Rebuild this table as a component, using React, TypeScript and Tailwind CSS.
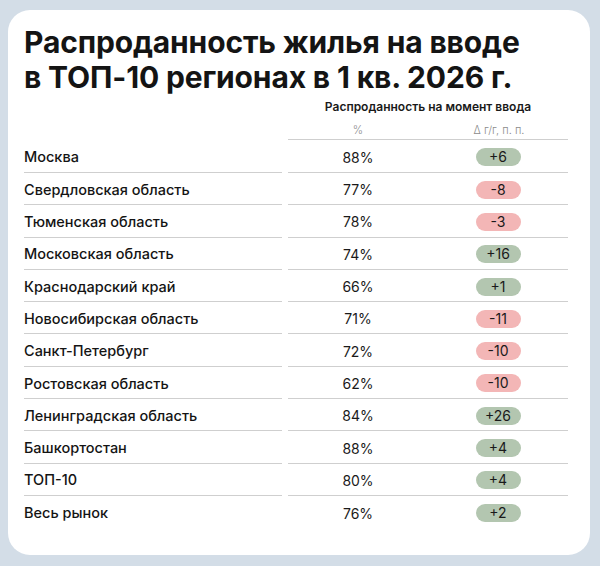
import React from "react";

const rows: { name: string; pct: string; delta: string; pos: boolean }[] = [
  { name: "Москва", pct: "88%", delta: "+6", pos: true },
  { name: "Свердловская область", pct: "77%", delta: "-8", pos: false },
  { name: "Тюменская область", pct: "78%", delta: "-3", pos: false },
  { name: "Московская область", pct: "74%", delta: "+16", pos: true },
  { name: "Краснодарский край", pct: "66%", delta: "+1", pos: true },
  { name: "Новосибирская область", pct: "71%", delta: "-11", pos: false },
  { name: "Санкт-Петербург", pct: "72%", delta: "-10", pos: false },
  { name: "Ростовская область", pct: "62%", delta: "-10", pos: false },
  { name: "Ленинградская область", pct: "84%", delta: "+26", pos: true },
  { name: "Башкортостан", pct: "88%", delta: "+4", pos: true },
  { name: "ТОП-10", pct: "80%", delta: "+4", pos: true },
  { name: "Весь рынок", pct: "76%", delta: "+2", pos: true },
];

export default function App() {
  return (
    <div
      className="w-[600px] h-[566px] bg-[#d3dde7] pt-[10px] pl-[8px]"
      style={{ fontFamily: "Inter, 'Noto Sans', sans-serif" }}
    >
      <div className="w-[582px] h-[545px] bg-white rounded-[22px] pl-[16px] pr-[22px] pt-[15px]">
        <h1 className="text-[30px] leading-[35px] font-bold text-[#141414] tracking-[-0.15px]">
          Распроданность жилья на вводе
          <br />в ТОП-10 регионах в 1 кв. 2026 г.
        </h1>
        <div className="flex mt-[5px]">
          <div className="w-[265px]" />
          <div className="w-[280px] flex flex-col">
            <div className="text-center text-[12px] font-semibold text-[#1a1a1a] leading-[14px] h-[22px]">
              Распроданность на момент ввода
            </div>
            <div className="flex h-[17px] text-[11px] text-[#8a8a8a] font-light leading-[16px]">
              <div className="w-[140px] text-center">%</div>
              <div className="w-[140px] text-center pl-[2px]">Δ г/г, п. п.</div>
            </div>
          </div>
        </div>
        <div className="flex flex-col">
          {rows.map((r, i) => (
            <div key={i} className={"flex " + (i === 0 ? "h-[34px]" : "h-[32.3px]")}>
              <div
                className={
                  "w-[259px] flex items-center pt-[2px] text-[14.5px] font-medium text-[#141414] " +
                  (i === rows.length - 1 ? "" : "border-b border-[#cfcfcf]")
                }
              >
                {r.name}
              </div>
              <div className="w-[6px]" />
              <div
                className={
                  "w-[280px] flex items-center pt-[2px] border-[#cfcfcf] " +
                  (i === 0 ? "border-t " : "") +
                  (i === rows.length - 1 ? "" : "border-b")
                }
              >
                <div className="w-[140px] text-center text-[14px] text-[#1a1a1a]">{r.pct}</div>
                <div className="w-[140px] flex justify-center">
                  <div
                    className={
                      "w-[45px] h-[18px] rounded-full flex items-center justify-center text-[14px] text-[#1a1a1a] leading-none " +
                      (r.pos ? "bg-[#b3c6b0]" : "bg-[#f3b6b6]")
                    }
                  >
                    {r.delta}
                  </div>
                </div>
              </div>
            </div>
          ))}
        </div>
      </div>
    </div>
  );
}
